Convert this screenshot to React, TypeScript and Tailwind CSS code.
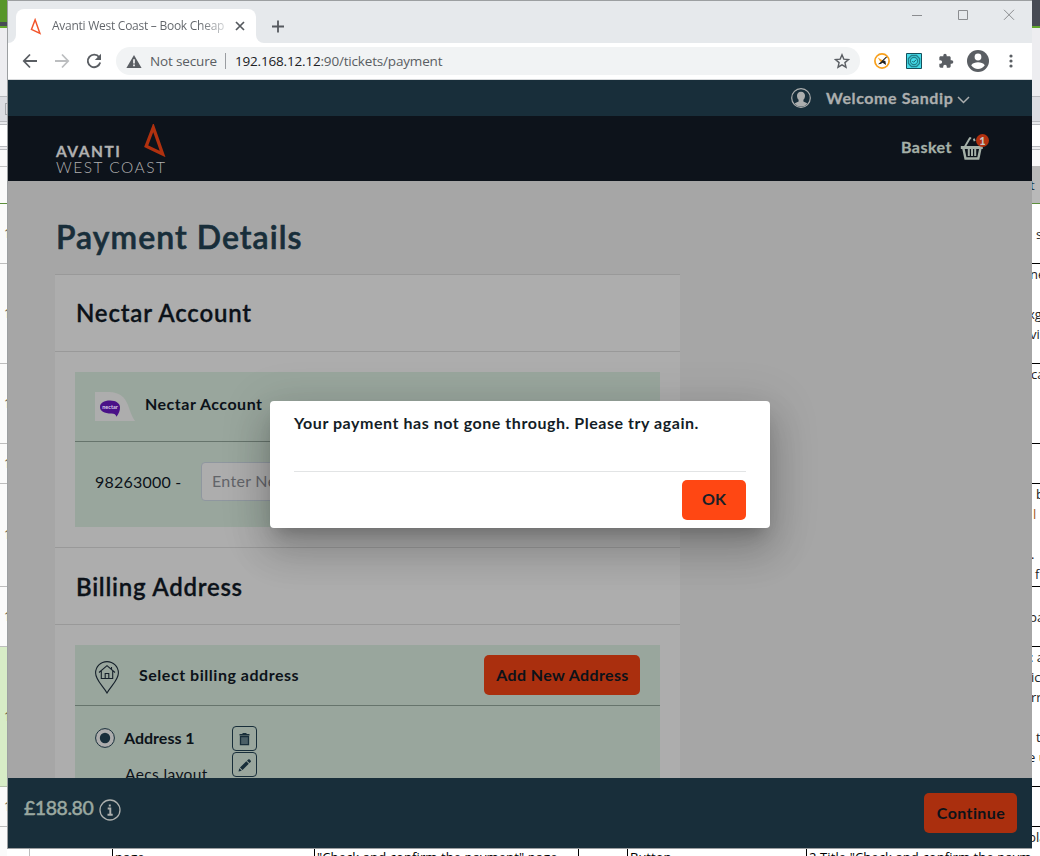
import React from "react";

const leftRows = [
  { h: "h-[60px]", bg: "bg-[#fafafa] border-[#bdbdbd]" },
  { h: "h-[100px]", bg: "bg-[#fafafa] border-[#bdbdbd]" },
  { h: "h-[80px]", bg: "bg-[#fafafa] border-[#bdbdbd]" },
  { h: "h-[40px]", bg: "bg-[#fafafa] border-[#bdbdbd]" },
  { h: "h-[103px]", bg: "bg-[#fafafa] border-[#bdbdbd]" },
  { h: "h-[60px]", bg: "bg-[#fafafa] border-[#bdbdbd]" },
  { h: "h-[140px]", bg: "bg-[#d7ecc6] border-[#b5c2ab]" },
  { h: "h-[40px]", bg: "bg-[#fafafa] border-[#bdbdbd]" },
];

function LeftStrip() {
  return (
    <div className="flex w-[7px] shrink-0 flex-col overflow-hidden bg-[#fafafa]">
      <div className="h-[22px] shrink-0 bg-[#57962a]" />
      <div className="h-[4px] shrink-0 bg-[#474b54]" />
      <div className="h-[2px] shrink-0 bg-[#62a82c]" />
      <div className="h-[69px] shrink-0 border-b border-[#b9bbbf] bg-[#ededf0]" />
      <div className="flex h-[25px] shrink-0 items-center justify-end border-b border-[#b9bbbf] bg-[#dcdde2]">
        <div className="h-[12px] w-[2px] border-y border-l border-[#a5a7ab]" />
      </div>
      <div className="h-[3px] shrink-0 border-b border-[#b9bbbf] bg-[#e7e8eb]" />
      <div className="h-[22px] shrink-0 border-b border-[#b9bbbf] bg-white" />
      <div className="h-[3px] shrink-0 border-b border-[#b9bbbf] bg-[#ececee]" />
      <div className="h-[17px] shrink-0 border-b border-[#c4c4c4] bg-[#fafafa]" />
      <div className="h-[37px] shrink-0 border-b border-[#5c8f3b] bg-[#fafafa]" />
      {leftRows.map((r, i) => (
        <div key={i} className={`${r.h} ${r.bg} flex shrink-0 items-center border-b pl-[4px]`}>
          <span className="font-['Open_Sans',sans-serif] text-[12px] leading-[14px] text-[#5b5037]">1</span>
        </div>
      ))}
    </div>
  );
}

const rightRows: { h: string; lines: [string, string][] }[] = [
  { h: "h-[60px]", lines: [["pt-[20px] pl-[4px]", "s"]] },
  { h: "h-[100px]", lines: [["-ml-[2px]", "ne"], ["pt-[20px] -ml-[4px]", "xg"], ["-ml-[2px]", "vi"]] },
  { h: "h-[80px]", lines: [["-ml-[1px]", "ca"]] },
  { h: "h-[40px]", lines: [] },
  { h: "h-[103px]", lines: [["pl-[4px]", "b"], ["pl-px text-[#a4571e]", "l"], ["pt-[20px] -ml-px", "."], ["pl-[3px]", "f"]] },
  { h: "h-[60px]", lines: [["pt-[20px] -ml-[3px]", "pa"]] },
  { h: "h-[140px]", lines: [["-ml-[2px]", ":\u00a0a"], ["-ml-px", "ic"], ["-ml-px", "rr"], ["pt-[20px] pl-[4px]", "t"], ["-ml-[4px]", "e u"]] },
  { h: "h-[40px]", lines: [] },
];

function RightStrip() {
  return (
    <div className="flex w-[8px] shrink-0 flex-col overflow-hidden whitespace-nowrap bg-white font-['Open_Sans',sans-serif] text-[13px] leading-[20px] text-[#222]">
      <div className="h-[26px] shrink-0 bg-[#474b54]" />
      <div className="h-[2px] shrink-0 bg-[#62a82c]" />
      <div className="h-[69px] shrink-0 border-b border-[#b9bbbf] bg-[#ededf0]" />
      <div className="h-[25px] shrink-0 border-b border-[#b9bbbf] bg-[#dcdde2]" />
      <div className="h-[3px] shrink-0 border-b border-[#b9bbbf] bg-[#e7e8eb]" />
      <div className="h-[22px] shrink-0 border-b border-[#b9bbbf] bg-white" />
      <div className="h-[3px] shrink-0 border-b border-[#b9bbbf] bg-[#ececee]" />
      <div className="h-[16px] shrink-0 bg-[#fafafa]" />
      <div className="h-[38px] shrink-0 border-b border-[#5c8f3b] bg-[#b9b9b9] pt-[9px] text-[#1a3342]"><div className="-ml-[2px]">t</div></div>
      {rightRows.map((r, i) => (
        <div key={i} className={`${r.h} shrink-0 border-b border-black`}>
          {r.lines.map(([p, t], j) => (
            <div key={j} className={p}>{t}</div>
          ))}
        </div>
      ))}
      <div className="-ml-[4px]">pla</div>
    </div>
  );
}

function BottomStrip() {
  return (
    <div className="flex h-[7px] w-[1025px] shrink-0 overflow-hidden whitespace-nowrap bg-white font-['Open_Sans',sans-serif] text-[13px] leading-[16px] text-black">
      <div className="w-[23px] shrink-0 border-r border-[#bdbdbd]" />
      <div className="w-[83px] shrink-0 border-r border-black" />
      <div className="w-[202px] shrink-0 border-r border-black pl-[2px]">page</div>
      <div className="w-[264px] shrink-0 border-r border-black pl-[2px] tracking-[0.1px]">"Check and confirm the payment" page</div>
      <div className="w-[49px] shrink-0 border-r border-black" />
      <div className="w-[179px] shrink-0 border-r border-black pl-[2px]">Button</div>
      <div className="shrink-0 pl-[2px] tracking-[0.1px]">2.Title "Check and confirm the payment</div>
    </div>
  );
}

function Delta({ className, color, width }: { className: string; color: string; width: number }) {
  return (
    <svg className={className} viewBox="0 0 22 33" fill="none">
      <path d="M9.3 3.5 L2.2 22.2 L18.6 30 Z" stroke={color} strokeWidth={width} strokeLinejoin="miter" />
    </svg>
  );
}

function Chrome() {
  return (
    <>
      <div className="flex h-[42px] shrink-0 items-end bg-[#e6e9ec]">
        <div className="flex w-[8px] shrink-0 self-end bg-white"><div className="h-[8px] w-full rounded-br-[8px] bg-[#e6e9ec]" /></div>
        <div className="flex h-[34px] w-[240px] items-center rounded-t-[8px] bg-white">
          <Delta className="ml-[14px] h-[17px] w-[12px] shrink-0" color="#f2552c" width={2.8} />
          <div className="ml-[10px] w-[173px] shrink-0 overflow-hidden whitespace-nowrap bg-gradient-to-r from-[#5f6368] from-85% to-[#d5d7d9] bg-clip-text font-['Open_Sans',sans-serif] text-[12px] leading-[18px] tracking-[-0.26px] text-transparent">Avanti West Coast – Book Cheap</div>
          <svg className="ml-[10px] size-[10px] shrink-0" viewBox="0 0 10 10"><path d="M1 1l8 8M9 1L1 9" stroke="#55595e" strokeWidth="1.7" /></svg>
        </div>
        <div className="flex w-[8px] shrink-0 self-end bg-white"><div className="h-[8px] w-full rounded-bl-[8px] bg-[#e6e9ec]" /></div>
        <svg className="mb-[10px] ml-[8px] size-[13px]" viewBox="0 0 13 13"><path d="M6 0.5v12M0 6.5h12" stroke="#55595e" strokeWidth="1.8" /></svg>
        <div className="ml-auto mr-[17px] flex items-center gap-[35px] self-start pt-[8px] text-[#8b8d90]">
          <svg className="size-[11px]" viewBox="0 0 11 11"><path d="M1 5.5h10" stroke="currentColor" /></svg>
          <svg className="size-[11px]" viewBox="0 0 11 11"><path d="M1.5 .5h9v9h-9z" fill="none" stroke="currentColor" /></svg>
          <svg className="size-[12px]" viewBox="0 0 12 12"><path d="M1 .8l10 10M11 .8l-10 10" stroke="currentColor" /></svg>
        </div>
      </div>
      <div className="flex h-[37px] shrink-0 items-center border-b border-[#d8dadc] bg-white text-[#5a5e63]">
        <svg className="ml-[14px] size-[16px]" viewBox="0 0 16 16" fill="none"><path d="M15 8H2M8 1.5L1.8 8L8 14.5" stroke="currentColor" strokeWidth="1.8" /></svg>
        <svg className="ml-[16px] size-[16px]" viewBox="0 0 16 16" fill="none"><path d="M1 8h13M8 1.5L14.2 8L8 14.5" stroke="#bcbec0" strokeWidth="1.8" /></svg>
        <svg className="ml-[16px] size-[16px]" viewBox="0 0 16 16" fill="none"><path d="M13.2 4.2A6.3 6.3 0 1 0 14.2 9.6" stroke="currentColor" strokeWidth="1.9" /><path d="M15 .8v6.2H8.8z" fill="currentColor" /></svg>
        <div className="ml-[14px] flex h-[28px] w-[744px] items-center rounded-full bg-[#f1f3f4] font-['Open_Sans',sans-serif] text-[13.5px] leading-[20px]">
          <svg className="ml-[10px] h-[13px] w-[16px]" viewBox="0 0 16 13"><path d="M8 0l7.6 13H.4z" fill="currentColor" /><path d="M8 4.2v4.3M8 9.5v1.7" stroke="#fff" strokeWidth="1.6" /></svg>
          <span className="ml-[8px] w-[67px] whitespace-nowrap tracking-[-0.15px]">Not secure</span>
          <span className="ml-[8px] h-[16px] w-px bg-[#9a9da1]" />
          <span className="ml-[9px] whitespace-nowrap tracking-[-0.18px]"><span className="text-[#202124]">192.168.12.12</span>:90/tickets/payment</span>
          <svg className="ml-auto mr-[10px] size-[16px]" viewBox="0 0 16 16" fill="none"><path d="M8 1.8l1.8 4.3 4.7.4-3.6 3.1 1.1 4.6L8 11.8l-4 2.4 1.1-4.6L1.5 6.5l4.7-.4z" stroke="currentColor" strokeWidth="1.4" /></svg>
        </div>
        <svg className="ml-[14px] size-[16px]" viewBox="0 0 16 16" fill="none"><circle cx="8" cy="8" r="7.1" stroke="#f8a01c" strokeWidth="1.7" fill="#fff" /><path d="M3.8 4.5L8 7l1 2-1.500.5L6 8.200z" fill="#f8a01c" /><path d="M12.600 3.800L8 8.300" stroke="#222" strokeWidth="1.100" /><path d="M8.800 7.300l-4.800 4 2.800-.3 1.800-1.200 3.400 2.200-.6-4z" fill="#222" /></svg>
        <svg className="ml-[16px] size-[16px]" viewBox="0 0 16 16" fill="none"><path d="M.5.5h15v15H.5z" fill="#45dbe8" stroke="#15505c" /><path d="M5.500 2.500h5l3 3v5l-3 3h-5l-3-3v-5z" stroke="#22808c" strokeWidth="1.400" /><circle cx="8" cy="8" r="3.600" stroke="#22808c" strokeWidth="1.200" /><path d="M6.300 8l1.300 1.300L10 6.800" stroke="#14616c" /></svg>
        <svg className="ml-[16px] size-[16px]" viewBox="0 0 24 24"><path fill="currentColor" d="M20.500 11H19V7c0-1.100-.9-2-2-2h-4V3.500a2.500 2.500 0 0 0-5 0V5H4c-1.100 0-2 .9-2 2v3.800h1.500a2.700 2.700 0 0 1 0 5.400H2V20c0 1.100.9 2 2 2h3.800v-1.500a2.700 2.700 0 0 1 5.400 0V22H17c1.100 0 2-.9 2-2v-4h1.500a2.500 2.500 0 0 0 0-5z" /></svg>
        <svg className="ml-[13px] size-[22px]" viewBox="0 0 22 22"><circle cx="11" cy="11" r="11" fill="currentColor" /><circle cx="11" cy="7" r="3.400" fill="#fff" /><path d="M4.200 15.300c1.400-2.200 4.200-3 6.800-3s5.400.8 6.800 3a8.200 8.200 0 0 1-13.600 0z" fill="#fff" /></svg>
        <svg className="ml-[20px] h-[14px] w-[4px]" viewBox="0 0 4 14" fill="currentColor"><circle cx="2" cy="2" r="1.600" /><circle cx="2" cy="7" r="1.600" /><circle cx="2" cy="12" r="1.600" /></svg>
      </div>
    </>
  );
}

function SiteHeader() {
  return (
    <>
      <div className="flex h-[36px] shrink-0 items-center justify-end bg-[#182e3a] pr-[62px] text-[#acaeae]">
        <svg className="size-[20px]" viewBox="0 0 20 20"><circle cx="10" cy="10" r="9.300" fill="none" stroke="currentColor" strokeWidth="1.200" /><path d="M10 3.800c-2.600 0-4 1.700-4 4 0 1.500.5 3 1.600 4v1.700c-1.200.7-3.300 1-4 2.200A8.600 8.600 0 0 0 10 18.600a8.600 8.600 0 0 0 6.400-2.900c-.7-1.200-2.800-1.500-4-2.200v-1.700c1.100-1 1.600-2.500 1.600-4 0-2.300-1.400-4-4-4z" fill="currentColor" /></svg>
        <span className="ml-[15px] w-[127px] whitespace-nowrap text-[16px] font-bold leading-[20px] tracking-[0.6px] [-webkit-text-stroke:0.3px_currentColor]">Welcome Sandip</span>
        <svg className="ml-[4px] mt-[4px] h-[8px] w-[13px]" viewBox="0 0 13 8"><path d="M1 1l5.500 5.500L12 1" fill="none" stroke="currentColor" strokeWidth="1.500" /></svg>
      </div>
      <div className="flex h-[65px] shrink-0 justify-between bg-[#0d131b] pl-[48px] pr-[42px] text-[#b0b0b0]">
        <div className="flex pt-[7px]">
          <div className="w-[86px] whitespace-nowrap pt-[20px] leading-[16px]">
            <div className="text-[15.500px] font-bold tracking-[1.500px] [-webkit-text-stroke:0.3px_currentColor]">AVANTI</div>
            <div className="text-[15.500px] font-light tracking-[1.500px]">WEST COAST</div>
          </div>
          <Delta className="ml-[2px] mt-px h-[33px] w-[22px]" color="#b0310f" width={3.300} />
        </div>
        <div className="flex items-start text-[#a5b0a8]">
          <span className="w-[53px] whitespace-nowrap pt-[21px] text-[16px] font-bold leading-[20px] tracking-[0.450px] [-webkit-text-stroke:0.3px_currentColor]">Basket</span>
          <div className="relative ml-[6px] mr-[6px] mt-[21px]">
            <svg className="h-[23px] w-[24px]" viewBox="0 0 24 23" fill="none"><path d="M.8 10.500h22" stroke="currentColor" strokeWidth="3" /><path d="M3.200 10.500l2.300 11h12.800l2.300-11" stroke="currentColor" strokeWidth="2.400" /><path d="M8.800 12v7M12 12v7M15.200 12v7" stroke="currentColor" strokeWidth="2" /><path d="M5 9.500L9.800 1.200h1.400M13.800 1.600l.9 2.500" stroke="currentColor" strokeWidth="1.900" /></svg>
            <span className="absolute left-[16px] top-[-3px] flex size-[13px] items-center justify-center rounded-full bg-[#b2310f] text-[11px] font-black leading-none text-[#c3c3c3]">1</span>
          </div>
        </div>
      </div>
    </>
  );
}

function NectarCard() {
  return (
    <div className="px-[20px] pb-[20px] pt-[20px]">
      <div className="h-[155px] bg-[#99a69d]">
        <div className="flex h-[70px] border-b border-[#66746c] pl-[20px]">
          <svg className="mt-[20px] h-[29px] w-[40px]" viewBox="0 0 40 29"><path d="M0 0h14c10 0 16 5 19 13 2 6 4 12 7 16H0z" fill="#adadad" /><path d="M15 8.500c6 0 10 2.800 10 6.800 0 3.500-1 6-3.500 9.500-.8-2.500-2-3.300-5-3.300C9 21.500 5 19 5 15s4-6.500 10-6.500z" fill="#4a1188" /><text x="15" y="17" textAnchor="middle" fontSize="5.500" fontWeight="700" fill="#d9cfe6" fontFamily="Lato, sans-serif">nectar</text></svg>
          <span className="ml-[10px] whitespace-nowrap pt-[22px] text-[16px] font-bold leading-[20px] tracking-[0.500px]">Nectar Account</span>
        </div>
        <div className="flex pl-[20px] pt-[20px]">
          <span className="w-[106px] pt-[10px] text-[16px] leading-[20px] tracking-[0.220px]">98263000 -</span>
          <div className="h-[39px] w-[300px] whitespace-nowrap rounded-[4px] border border-[#8f979f] bg-[#adadad] pl-[10px] text-[16px] leading-[36px] tracking-[0.300px] text-[#626469]">Enter Nectar card number</div>
        </div>
      </div>
    </div>
  );
}

function BillingCard() {
  return (
    <div className="px-[20px] pt-[20px]">
      <div className="h-[200px] bg-[#99a69d]">
        <div className="flex h-[61px] items-center border-b border-[#66746c] px-[20px]">
          <svg className="mt-[5px] h-[33px] w-[24px]" viewBox="0 0 24 33" fill="none" stroke="#16212b" strokeWidth="1.100"><path d="M12 32C8 25 .6 19 .6 12a11.400 11.400 0 0 1 22.800 0c0 7-7.400 13-11.400 20z" /><path d="M4 11.500l8-6.800 8 6.800M6.300 10v7.500h11.400V10M10.200 17.500v-5h3.600v5M16.500 8V6" /></svg>
          <span className="ml-[20px] whitespace-nowrap text-[16px] font-bold tracking-[0.530px]">Select billing address</span>
          <button className="ml-auto h-[40px] w-[156px] whitespace-nowrap rounded-[5px] bg-[#aa2f0e] pl-px text-[16px] font-bold tracking-[0.380px]">Add New Address</button>
        </div>
        <div className="flex pl-[20px] pt-[20px]">
          <div className="w-[137px]">
            <div className="flex items-center">
              <svg className="mt-px size-[20px]" viewBox="0 0 20 20"><circle cx="10" cy="10" r="9.400" fill="#adadad" stroke="#182e3a" /><circle cx="10" cy="10" r="5.200" fill="#182e3a" /></svg>
              <span className="ml-[9px] mt-[2px] whitespace-nowrap text-[16px] font-bold leading-[20px]">Address 1</span>
            </div>
            <div className="ml-[30px] mt-[16px] whitespace-nowrap text-[15.500px] leading-[20px] tracking-[0.380px]">Aecs layout</div>
          </div>
          <div className="flex flex-col gap-px text-[#182e3a]">
            <div className="flex size-[25px] items-center justify-center rounded-[4px] border border-[#182e3a]"><svg className="mt-px size-[13px]" viewBox="0 0 13 13"><path d="M2.500 3.500h8v8.200h-8z" fill="#4b5f66" stroke="currentColor" strokeWidth="1.300" /><path d="M1.500 1.700h10M4.500.7h4" stroke="currentColor" strokeWidth="1.500" /></svg></div>
            <div className="flex size-[25px] items-center justify-center rounded-[4px] border border-[#182e3a]"><svg className="mt-px size-[13px]" viewBox="0 0 13 13"><path d="M.5 12.500l.8-3.200 2.500 2.400zM2 8.500l6.300-6.200 2.500 2.500-6.300 6.300zM9 1.700L10.200.5c.5-.5 1-.5 1.500 0l.9.900c.5.500.5 1 0 1.500l-1.100 1.200z" fill="currentColor" /></svg></div>
          </div>
        </div>
      </div>
    </div>
  );
}

function Dialog() {
  return (
    <div className="absolute left-[262px] top-[220px] flex h-[127px] w-[500px] flex-col rounded-[4px] bg-white px-[24px] shadow-[0_11px_15px_-7px_rgba(0,0,0,0.2),0_24px_38px_3px_rgba(0,0,0,0.14),0_9px_46px_8px_rgba(0,0,0,0.12)]">
      <div className="h-[71px] whitespace-nowrap border-b border-[#e2e4e5] pt-[12px] text-[16px] font-bold leading-[20px] tracking-[0.540px] text-[#141d26]">Your payment has not gone through. Please try again.</div>
      <button className="mt-[8px] h-[40px] w-[64px] self-end rounded-[5px] bg-[#ff4713] pb-[2px] text-[16px] font-bold text-[#1a2027]">OK</button>
    </div>
  );
}

export default function App() {
  return (
    <div className="flex h-[856px] w-[1040px] overflow-hidden bg-white">
      <LeftStrip />
      <div className="flex w-[1025px] shrink-0 flex-col">
        <div className="flex h-[849px] shrink-0 flex-col overflow-hidden border-b border-l border-t border-b-[#9c9fa1] border-l-[#9c9fa1] border-t-[#9c9fa1] font-['Lato',sans-serif] text-[#0c1219]">
          <Chrome />
          <SiteHeader />
          <main className="relative h-[597px] shrink-0 overflow-hidden bg-[#a6a6a6] pl-[47px]">
            <h1 className="h-[93px] whitespace-nowrap pl-px pt-[36px] text-[32px] font-semibold leading-[40px] tracking-[1.050px] text-[#182e3a] [-webkit-text-stroke:0.6px_currentColor]">Payment Details</h1>
            <div className="w-[625px] bg-[#adadad]">
              <h2 className="h-[78px] whitespace-nowrap border-y border-[#999999] pl-[21px] pt-[22px] text-[24px] font-semibold leading-[32px] tracking-[0.800px] [-webkit-text-stroke:0.3px_currentColor]">Nectar Account</h2>
              <NectarCard />
              <h2 className="h-[78px] whitespace-nowrap border-y border-[#999999] pl-[21px] pt-[23px] text-[24px] font-semibold leading-[32px] tracking-[0.750px] [-webkit-text-stroke:0.3px_currentColor]">Billing Address</h2>
              <BillingCard />
            </div>
            <Dialog />
          </main>
          <footer className="flex h-[70px] shrink-0 bg-[#182e3a] pl-[16px] pr-[15px]">
            <span className="w-[71px] whitespace-nowrap pt-[18px] text-[19.500px] font-medium leading-[24px] tracking-[-0.450px] text-[#9aa8a0] [-webkit-text-stroke:0.4px_currentColor]">£188.80</span>
            <svg className="ml-[4px] mt-[21px] size-[22px]" viewBox="0 0 22 22" fill="none" stroke="#adb0ae"><circle cx="11" cy="11" r="10" strokeWidth="1.300" /><path d="M8.700 9.500h2.600v6M8.500 15.700h5.200" strokeWidth="1.900" /><path d="M9.800 6.500h2" strokeWidth="2" /></svg>
            <button className="ml-auto mt-[15px] h-[40px] w-[93px] rounded-[5px] bg-[#aa2f0e] pl-px text-[16px] font-bold tracking-[0.400px]">Continue</button>
          </footer>
        </div>
        <BottomStrip />
      </div>
      <RightStrip />
    </div>
  );
}
